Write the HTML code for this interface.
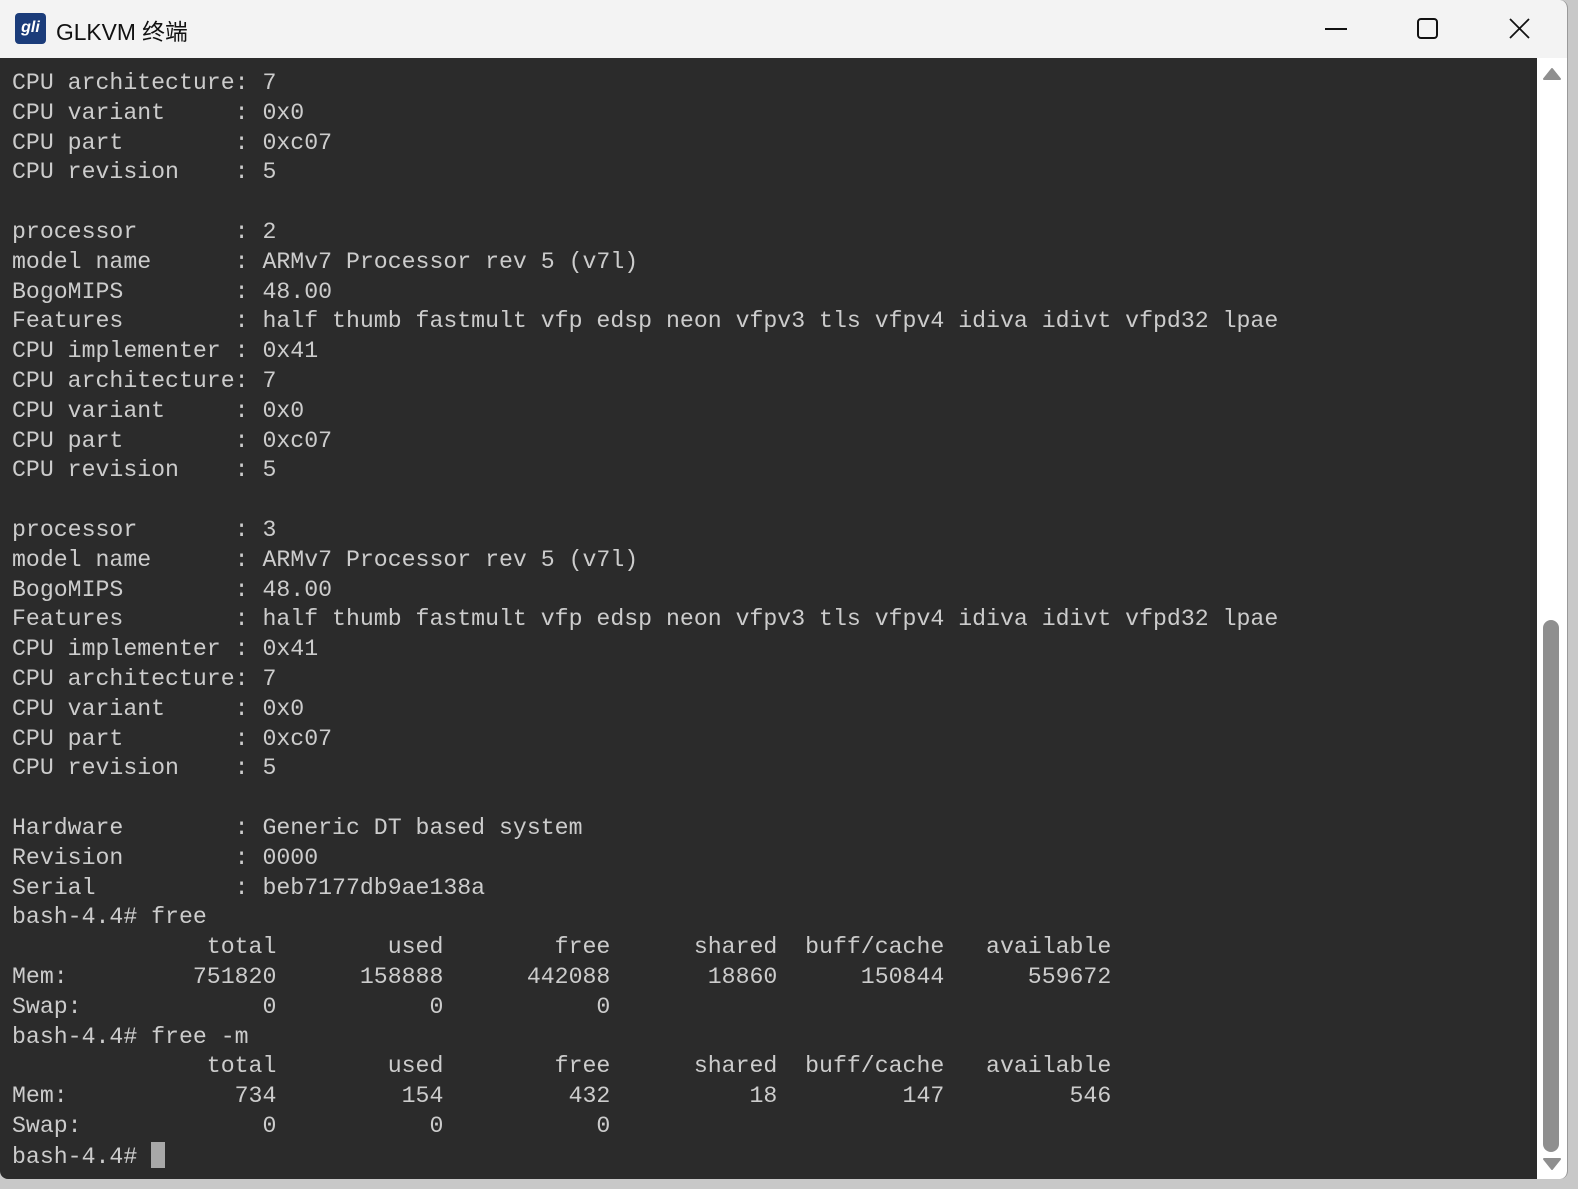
<!DOCTYPE html>
<html><head><meta charset="utf-8">
<style>
html,body{margin:0;padding:0;width:1578px;height:1189px;background:#c8c8c8;overflow:hidden}
.win{position:absolute;left:0;top:0;width:1567px;height:1179px;background:#2b2b2b;border-radius:0 8px 8px 8px;overflow:hidden;border-right:1px solid #999;}
.title{position:absolute;left:0;top:0;width:1567px;height:58px;background:#f3f3f3}
.ttext{position:absolute;left:56px;top:14px;font:22.8px "Liberation Sans","Noto Sans CJK SC",sans-serif;color:#111}
.logo{position:absolute;left:15px;top:13px;width:31px;height:31px;background:#1b3c7a;border-radius:4px;color:#fff;font:italic bold 16px "Liberation Sans",sans-serif;text-align:center;line-height:30px}
pre{position:absolute;left:12px;top:69px;margin:0;font:23.2px/29.8px "Liberation Mono",monospace;color:#cccccc;white-space:pre}
.sb{position:absolute;left:1537px;top:58px;width:30px;height:1121px;background:#fff}
.thumb{position:absolute;left:6px;top:562px;width:16px;height:532px;background:#8f8f8f;border-radius:8px}
.cur{display:inline-block;width:14px;height:26px;background:#a8a8a8;vertical-align:-5px}
</style></head><body>
<div class="win">
<div class="title">
<div class="logo">gli</div>
<div class="ttext">GLKVM 终端</div>
<svg style="position:absolute;left:1320px;top:14px" width="220" height="30">
<line x1="5" y1="15" x2="27" y2="15" stroke="#111" stroke-width="2"/>
<rect x="98" y="5" width="19" height="19" rx="3" fill="none" stroke="#111" stroke-width="2"/>
<line x1="190" y1="5" x2="209" y2="24" stroke="#111" stroke-width="1.8"/>
<line x1="209" y1="5" x2="190" y2="24" stroke="#111" stroke-width="1.8"/>
</svg>
</div>
<pre>CPU architecture: 7
CPU variant     : 0x0
CPU part        : 0xc07
CPU revision    : 5

processor       : 2
model name      : ARMv7 Processor rev 5 (v7l)
BogoMIPS        : 48.00
Features        : half thumb fastmult vfp edsp neon vfpv3 tls vfpv4 idiva idivt vfpd32 lpae
CPU implementer : 0x41
CPU architecture: 7
CPU variant     : 0x0
CPU part        : 0xc07
CPU revision    : 5

processor       : 3
model name      : ARMv7 Processor rev 5 (v7l)
BogoMIPS        : 48.00
Features        : half thumb fastmult vfp edsp neon vfpv3 tls vfpv4 idiva idivt vfpd32 lpae
CPU implementer : 0x41
CPU architecture: 7
CPU variant     : 0x0
CPU part        : 0xc07
CPU revision    : 5

Hardware        : Generic DT based system
Revision        : 0000
Serial          : beb7177db9ae138a
bash-4.4# free
              total        used        free      shared  buff/cache   available
Mem:         751820      158888      442088       18860      150844      559672
Swap:             0           0           0
bash-4.4# free -m
              total        used        free      shared  buff/cache   available
Mem:            734         154         432          18         147         546
Swap:             0           0           0
bash-4.4# <span class="cur"></span></pre>
<div class="sb">
<svg style="position:absolute;left:5px;top:8px" width="20" height="16"><path d="M2 13 L10 3 L18 13 Z" fill="#8f8f8f" stroke="#8f8f8f" stroke-linejoin="round" stroke-width="2"/></svg>
<div class="thumb"></div>
<svg style="position:absolute;left:5px;top:1098px" width="20" height="16"><path d="M2 3 L18 3 L10 13 Z" fill="#8f8f8f" stroke="#8f8f8f" stroke-linejoin="round" stroke-width="2"/></svg>
</div>
</div>
</body></html>
